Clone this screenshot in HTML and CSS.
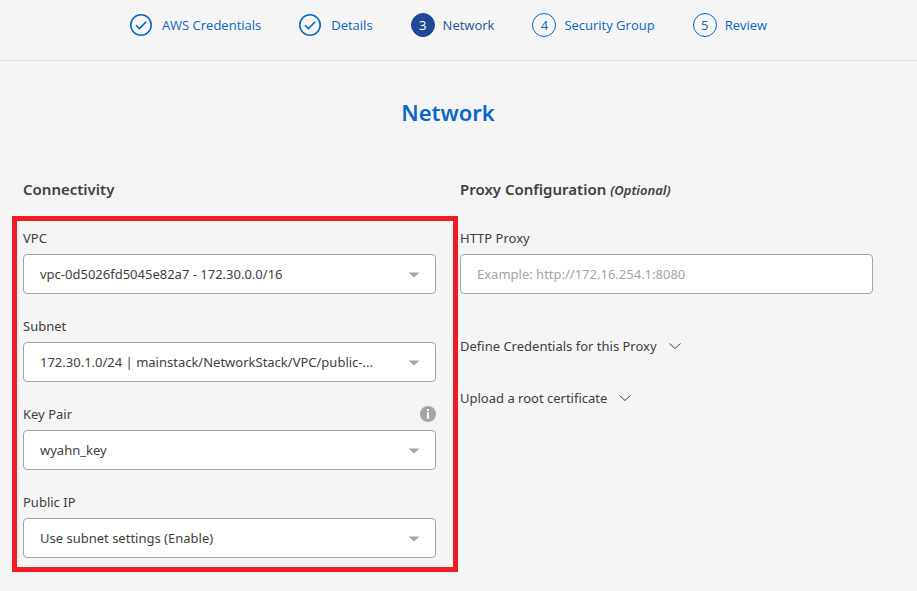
FILE: index.html
```html
<!DOCTYPE html>
<html lang="en">
<head>
<meta charset="utf-8">
<meta name="viewport" content="width=device-width, initial-scale=1">
<title>Network</title>
<link rel="stylesheet" href="styles.css">
</head>
<body>
<header class="wizard">
  <ol class="steps">
    <li><a class="step" href="#credentials"><svg class="step-check" viewBox="0 0 22 22" aria-hidden="true"><circle cx="11" cy="11" r="10.2"/><path d="M6 11.2l3.4 3.4 6.8-6.8"/></svg>AWS Credentials</a></li>
    <li><a class="step" href="#details"><svg class="step-check" viewBox="0 0 22 22" aria-hidden="true"><circle cx="11" cy="11" r="10.2"/><path d="M6 11.2l3.4 3.4 6.8-6.8"/></svg>Details</a></li>
    <li><a class="step step-current" href="#network" aria-current="step"><span class="step-number">3</span>Network</a></li>
    <li><a class="step" href="#security"><span class="step-number">4</span>Security Group</a></li>
    <li><a class="step" href="#review"><span class="step-number">5</span>Review</a></li>
  </ol>
</header>
<main class="page">
  <h1 class="title">Network</h1>
  <form class="columns">
    <section>
      <h2 class="section-title">Connectivity</h2>
      <div class="fields highlighted">
        <div class="field">
          <label for="vpc">VPC</label>
          <div class="select">
            <select id="vpc"><option>vpc-0d5026fd5045e82a7 - 172.30.0.0/16</option></select>
            <svg class="caret" viewBox="0 0 12 6" aria-hidden="true"><path d="M0.5 0.5h11L6 5.5z"/></svg>
          </div>
        </div>
        <div class="field">
          <label for="subnet">Subnet</label>
          <div class="select">
            <select id="subnet"><option>172.30.1.0/24 | mainstack/NetworkStack/VPC/public-...</option></select>
            <svg class="caret" viewBox="0 0 12 6" aria-hidden="true"><path d="M0.5 0.5h11L6 5.5z"/></svg>
          </div>
        </div>
        <div class="field">
          <div class="label-row">
            <label for="key">Key Pair</label>
            <button class="info" type="button" aria-label="Key pair help"><svg viewBox="0 0 16 16" aria-hidden="true"><circle cx="8" cy="8" r="8" fill="#a5a5a5"/><path fill="#fff" d="M7 3h2v2H7zM6.500 6.300h2.500v5.200h.5v1h-3v-1H7V7.200h-.5z"/></svg></button>
          </div>
          <div class="select">
            <select id="key"><option>wyahn_key</option></select>
            <svg class="caret" viewBox="0 0 12 6" aria-hidden="true"><path d="M0.5 0.5h11L6 5.5z"/></svg>
          </div>
        </div>
        <div class="field">
          <label for="ip">Public IP</label>
          <div class="select">
            <select id="ip"><option>Use subnet settings (Enable)</option></select>
            <svg class="caret" viewBox="0 0 12 6" aria-hidden="true"><path d="M0.5 0.5h11L6 5.5z"/></svg>
          </div>
        </div>
      </div>
    </section>
    <section>
      <h2 class="section-title">Proxy Configuration <em>(Optional)</em></h2>
      <div class="field">
        <label for="proxy">HTTP Proxy</label>
        <input id="proxy" type="text" placeholder="Example: http://172.16.254.1:8080">
      </div>
      <div class="expanders">
        <button class="expander" type="button" aria-expanded="false">Define Credentials for this Proxy<svg viewBox="0 0 12 8" aria-hidden="true"><path d="M0.500 1.500L6 6.500l5.500-5"/></svg></button>
        <button class="expander" type="button" aria-expanded="false">Upload a root certificate<svg viewBox="0 0 12 8" aria-hidden="true"><path d="M0.500 1.500L6 6.500l5.500-5"/></svg></button>
      </div>
    </section>
  </form>
</main>
</body>
</html>
```
FILE: styles.css
```css
* {
  box-sizing: border-box;
}

body {
  margin: 0;
  background: #f5f5f5;
  color: #404040;
  font: 13px/20px "Segoe UI", "Noto Sans", sans-serif;
}

.wizard {
  padding: 13px 20px 23px 0;
  border-bottom: 1px solid #dcdcdc;
  font-family: "Segoe UI", "Open Sans", sans-serif;
}

.steps {
  display: flex;
  justify-content: center;
  gap: 38px;
  margin: 0;
  padding: 0;
  list-style: none;
}

.step {
  display: flex;
  align-items: center;
  gap: 8px;
  height: 24px;
  color: #0967c4;
  text-decoration: none;
  white-space: nowrap;
}

.step-check {
  width: 22px;
  height: 22px;
  margin-right: 2px;
  fill: none;
  stroke: #0967c4;
  stroke-width: 1.6;
}

.step-number {
  display: flex;
  align-items: center;
  justify-content: center;
  width: 24px;
  height: 24px;
  border: 1px solid #0967c4;
  border-radius: 50%;
}

.step-current {
  color: #1f4e97;
}

.step-current .step-number {
  border-color: #1f4a93;
  background: #1f4a93;
  color: #fff;
}

.page {
  padding: 36px 44px 24px 23px;
}

.title {
  margin: 0 0 50px;
  color: #0967c8;
  font-size: 22px;
  font-weight: 600;
  line-height: 30px;
  text-align: center;
}

.columns {
  display: grid;
  grid-template-columns: minmax(0, 1fr) minmax(0, 1fr);
  gap: 24px;
}

.section-title {
  margin: 0 0 27px;
  font-size: 15px;
  font-weight: 600;
  line-height: 24px;
}

.section-title em {
  font-size: 13px;
  line-height: 1;
}

.fields {
  display: grid;
  gap: 22px;
}

.highlighted {
  position: relative;
}

.highlighted::after {
  content: "";
  position: absolute;
  inset: -12px -22px -14px -11px;
  border: 5px solid #ee1c25;
  pointer-events: none;
}

.field {
  display: grid;
  gap: 6px;
}

.label-row {
  display: flex;
  align-items: center;
  justify-content: space-between;
}

.info {
  width: 16px;
  height: 16px;
  padding: 0;
  border: 0;
  background: none;
}

.info svg {
  display: block;
}

.select {
  position: relative;
}

select,
input {
  display: block;
  width: 100%;
  height: 40px;
  padding: 0 16px;
  border: 1px solid #a5a5a5;
  border-radius: 4px;
  background: #fff;
  color: #404040;
  font: inherit;
}

select {
  appearance: none;
  padding-right: 40px;
  text-overflow: ellipsis;
}

input::placeholder {
  color: #a5a5a5;
}

.caret {
  position: absolute;
  top: 18px;
  right: 16px;
  width: 12px;
  height: 6px;
  fill: #a5a5a5;
  pointer-events: none;
}

.expanders {
  display: grid;
  justify-items: start;
  gap: 32px;
  margin-top: 42px;
}

.expander {
  display: flex;
  align-items: center;
  gap: 12px;
  padding: 0;
  border: 0;
  background: none;
  color: inherit;
  font: inherit;
}

.expander svg {
  width: 12px;
  height: 8px;
  fill: none;
  stroke: #404040;
}
```
